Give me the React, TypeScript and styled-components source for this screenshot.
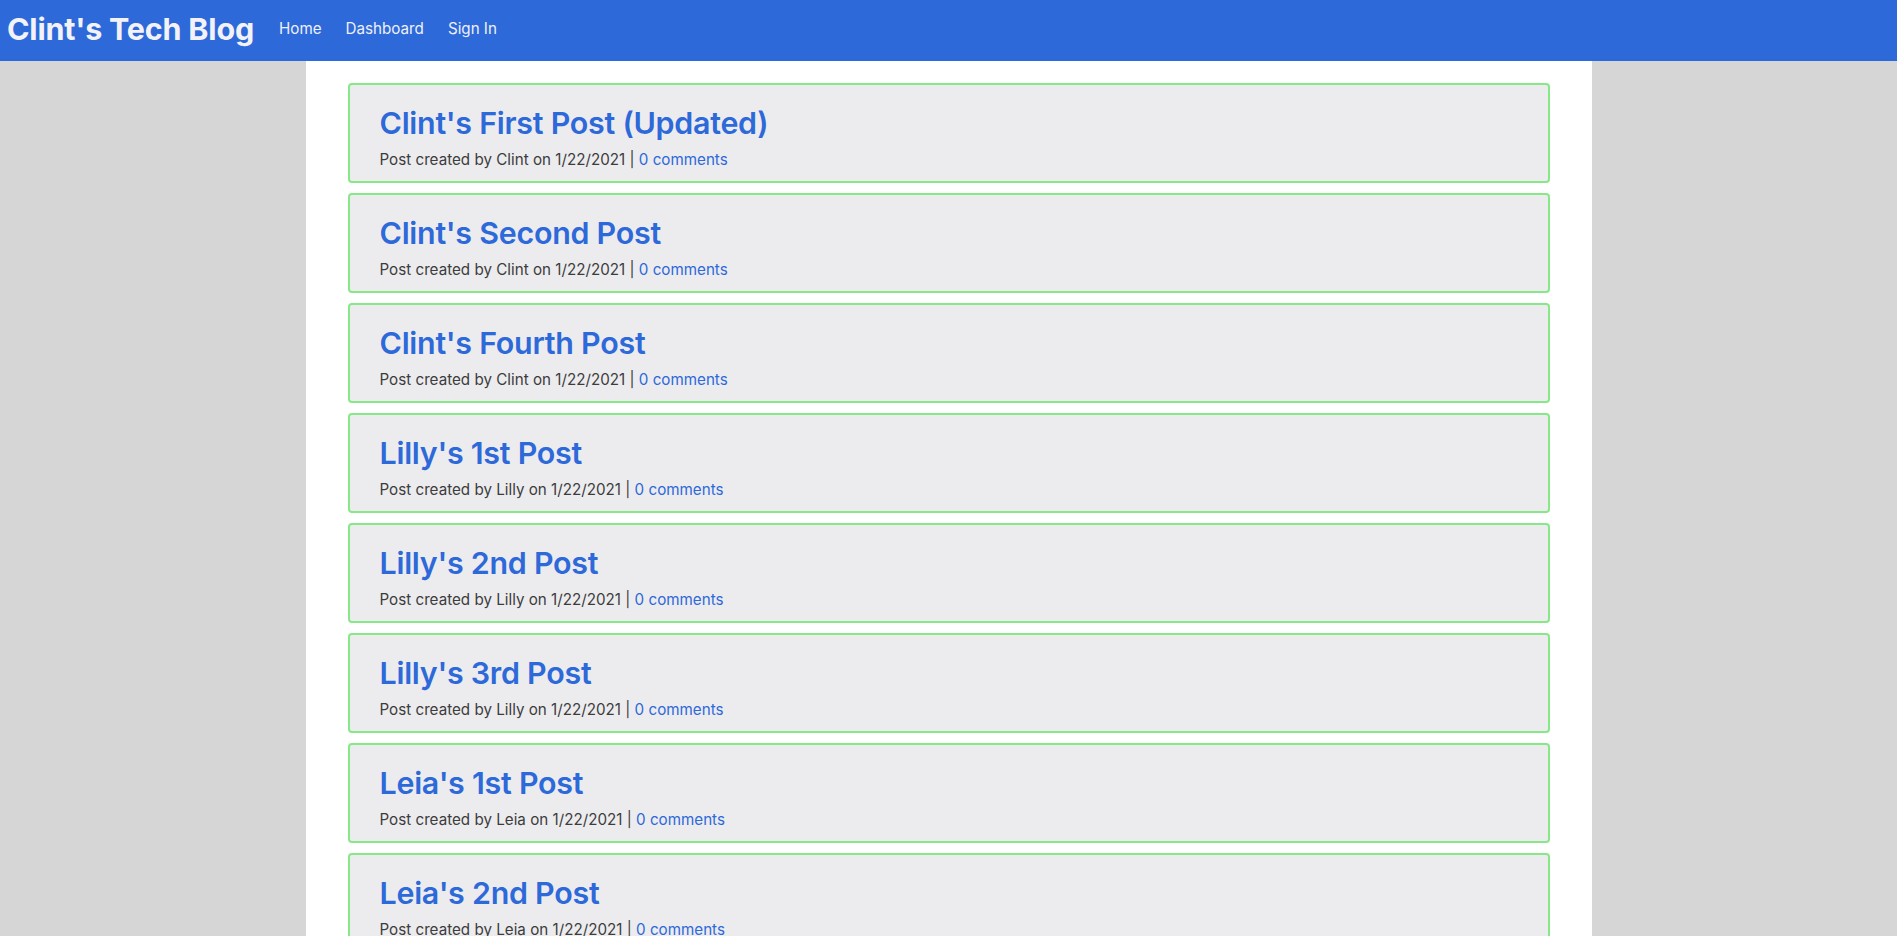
import React from "react";
import styled, { createGlobalStyle } from "styled-components";

const Global = createGlobalStyle`
  html, body { margin: 0; padding: 0; }
  body {
    background: #d6d6d6;
    font-family: Inter, "Noto Sans", "Liberation Sans", sans-serif;
    color: #333;
  }
`;

const NavBar = styled.header`
  height: 61px;
  background: #2d69d9;
  display: flex;
  align-items: center;
  padding: 0 7px 4px;
  box-sizing: border-box;
`;

const Brand = styled.h1`
  margin: 0;
  font-size: 30.5px;
  font-weight: 700;
  color: #f3f3f7;
  letter-spacing: -0.2px;
`;

const NavLinks = styled.nav`
  display: flex;
  gap: 24px;
  margin-left: 25px;
`;

const NavLink = styled.a`
  color: #eef0f8;
  font-size: 15.2px;
  text-decoration: none;
`;

const Main = styled.main`
  width: 1286px;
  margin: 0 auto;
  background: #ffffff;
  padding: 22px 42px;
  box-sizing: border-box;
  min-height: 875px;
  display: flex;
  flex-direction: column;
  gap: 10px;
`;

const Card = styled.article`
  height: 100px;
  box-sizing: border-box;
  border: 2px solid #86e886;
  border-radius: 4px;
  background: #ececef;
  padding: 18px 30px 0;
`;

const Title = styled.h2`
  margin: 0;
  font-size: 30.4px;
  font-weight: 600;
  color: #2d69d9;
  line-height: 40px;
  letter-spacing: -0.25px;
`;

const Meta = styled.p`
  margin: 7px 0 0;
  font-size: 15.2px;
  color: #3c3c3c;
  line-height: 20px;
`;

const CommentLink = styled.a`
  color: #2d69d9;
  text-decoration: none;
`;

const posts = [
  { title: "Clint's First Post (Updated)", author: "Clint" },
  { title: "Clint's Second Post", author: "Clint" },
  { title: "Clint's Fourth Post", author: "Clint" },
  { title: "Lilly's 1st Post", author: "Lilly" },
  { title: "Lilly's 2nd Post", author: "Lilly" },
  { title: "Lilly's 3rd Post", author: "Lilly" },
  { title: "Leia's 1st Post", author: "Leia" },
  { title: "Leia's 2nd Post", author: "Leia" },
];

export default function App() {
  return (
    <>
      <Global />
      <NavBar>
        <Brand>Clint's Tech Blog</Brand>
        <NavLinks>
          <NavLink href="#">Home</NavLink>
          <NavLink href="#">Dashboard</NavLink>
          <NavLink href="#">Sign In</NavLink>
        </NavLinks>
      </NavBar>
      <Main>
        {posts.map((p) => (
          <Card key={p.title}>
            <Title>{p.title}</Title>
            <Meta>
              Post created by {p.author} on 1/22/2021 | <CommentLink href="#">0 comments</CommentLink>
            </Meta>
          </Card>
        ))}
      </Main>
    </>
  );
}
